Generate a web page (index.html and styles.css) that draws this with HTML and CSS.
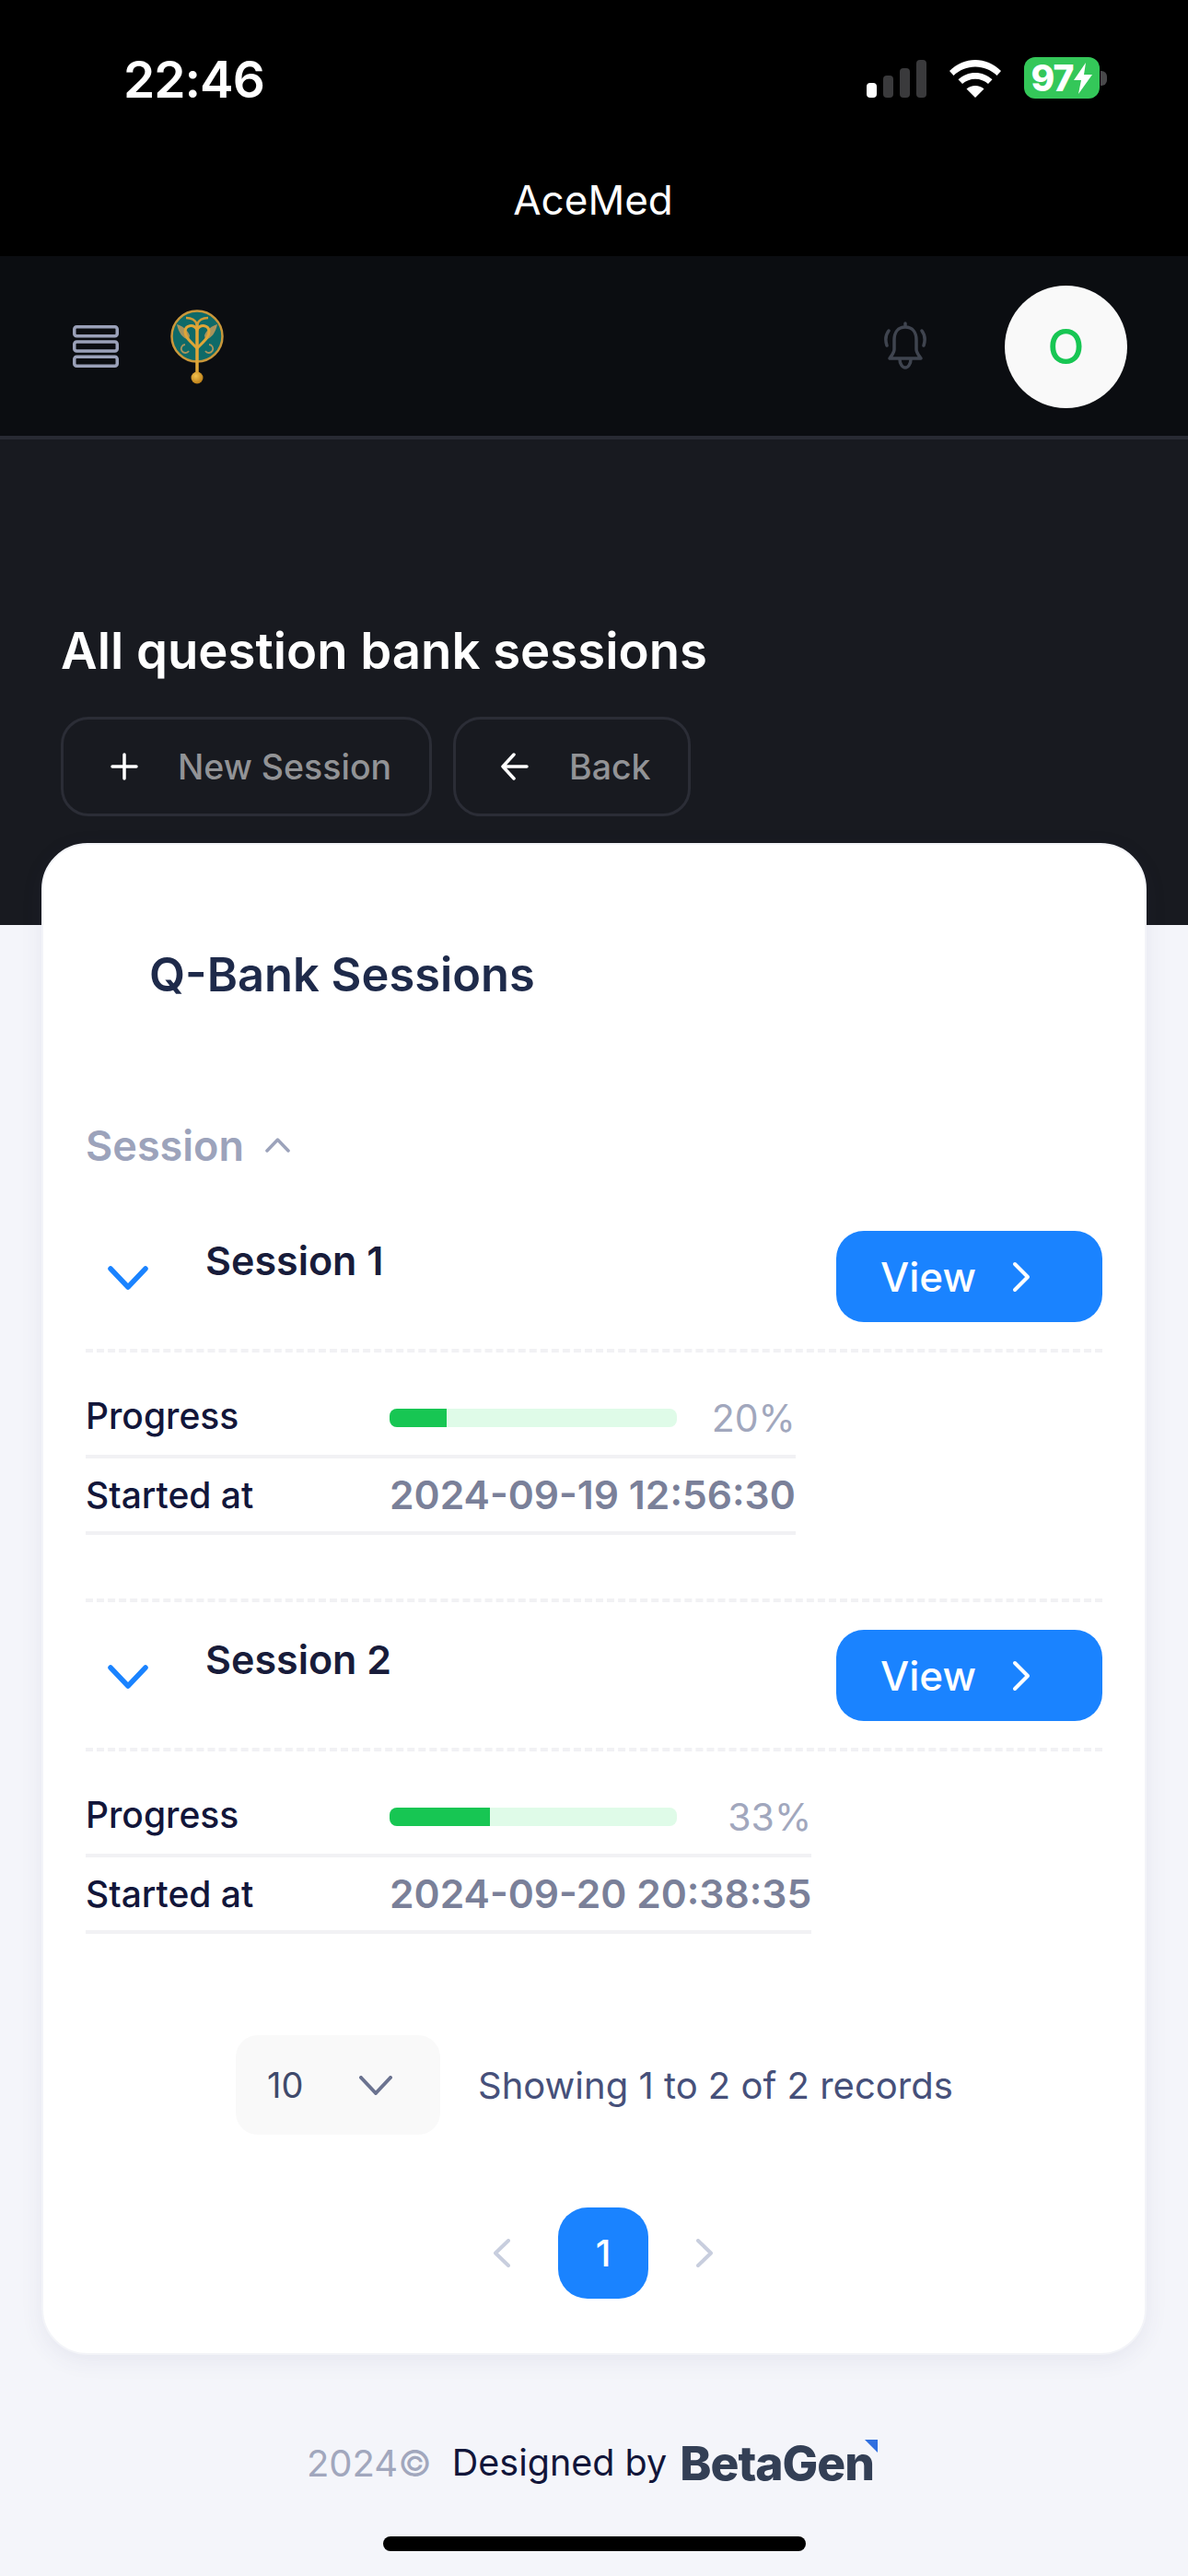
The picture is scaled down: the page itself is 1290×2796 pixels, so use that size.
FILE: index.html
```html
<!DOCTYPE html>
<html lang="en">
<head>
<meta charset="utf-8">
<title>AceMed</title>
<link rel="stylesheet" href="styles.css">
</head>
<body>
<div class="app">
  <div class="sys">
    <div class="status">
      <span class="time">22:46</span>
      <div class="status-icons">
        <svg class="signal" width="65" height="41" viewBox="0 0 65 41"><rect x="0" y="25" width="11" height="16" rx="4" fill="#fff"/><rect x="18" y="17" width="11" height="24" rx="4" fill="#3a3a3c"/><rect x="36" y="9" width="11" height="32" rx="4" fill="#3a3a3c"/><rect x="54" y="0" width="11" height="41" rx="4" fill="#3a3a3c"/></svg>
        <svg class="wifi" width="56" height="41" viewBox="0 0 56 41" fill="#fff"><path d="M28 0C38 0 48 4 56 12l-4.500 5C45 11 37 7.500 28 7.500S11 11 4.500 17L0 12C8 4 18 0 28 0z"/><path d="M28 14c7 0 13.500 2.700 18.500 7.300L42 26c-3.700-3.300-8.700-5.300-14-5.300s-10.300 2-14 5.300l-4.500-4.700C14.500 16.700 21 14 28 14z"/><path d="M28 28c3.700 0 7 1.300 9.500 3.600L28 41l-9.500-9.400C21 29.300 24.300 28 28 28z"/></svg>
        <div class="battery">
          <div class="battery-body"><span class="battery-num">97</span><svg width="20" height="34" viewBox="0 0 20 34" fill="#fff"><path d="M13 0 0 19h8l-3 15L20 13h-9z"/></svg></div>
          <span class="battery-tip"></span>
        </div>
      </div>
    </div>
    <div class="app-name">AceMed</div>
  </div>

  <header class="nav">
    <svg class="menu" width="50" height="46" viewBox="0 0 50 46" fill="none" stroke="#9aa0b8" stroke-width="3.500"><rect x="1.750" y="1.750" width="46.500" height="10" rx="2.500"/><rect x="1.750" y="18" width="46.500" height="10" rx="2.500"/><rect x="1.750" y="34.250" width="46.500" height="10" rx="2.500"/></svg>
    <svg class="logo" width="58" height="82" viewBox="0 0 58 82" fill="none">
      <defs>
        <radialGradient id="ball" cx="40%" cy="35%" r="70%"><stop offset="0" stop-color="#f2c14e"/><stop offset="1" stop-color="#b87a14"/></radialGradient>
      </defs>
      <circle cx="29" cy="29" r="27.500" fill="#0e6a68" stroke="#c9973a" stroke-width="2.500"/>
      <path d="M7 16c2 9 6 15 13 17l1-5c-3-7-8-10-14-12zM51 16c-2 9-6 15-13 17l-1-5c3-7 8-10 14-12z" fill="#a8935c"/>
      <path d="M29 42C21 34 16 30 16 24c0-7 9-9 13-2 4-7 13-5 13 2 0 6-5 10-13 18z" stroke="#dfa637" stroke-width="3"/>
      <path d="M29 68V14" stroke="#dfa637" stroke-width="3.500"/>
      <path d="M29 16c-2-5-6-7-12-7M29 16c2-5 6-7 12-7" stroke="#cf9a35" stroke-width="2.500"/>
      <path d="M16 38a4.500 4.500 0 1 0 4 7M42 38a4.500 4.500 0 1 1-4 7" stroke="#a8935c" stroke-width="1.800"/>
      <circle cx="29" cy="74" r="6.500" fill="url(#ball)"/>
    </svg>
    <div class="nav-spacer"></div>
    <svg class="bell" width="46" height="52" viewBox="0 0 46 52" fill="none" stroke="#3f444f" stroke-width="3.500" stroke-linecap="round" stroke-linejoin="round"><path d="M23 2v4M23 6c-8 0-12 6-12 14v10c0 4-3 7-5 10h34c-2-3-5-6-5-10V20c0-8-4-14-12-14z"/><path d="M17 41c0 5 3 9 6 9s6-4 6-9"/><path d="M3 26c-2-6-1-12 2-16M43 26c2-6 1-12-2-16"/></svg>
    <div class="avatar">O</div>
  </header>

  <section class="hero">
    <h1 class="hero-title">All question bank sessions</h1>
    <div class="hero-actions">
      <a class="ghost-btn ghost-new">
        <svg width="30" height="30" viewBox="0 0 30 30" stroke="#fff" stroke-width="3.500" stroke-linecap="round"><path d="M15 2v26M2 15h26"/></svg>
        <span>New Session</span>
      </a>
      <a class="ghost-btn ghost-back">
        <svg width="30" height="30" viewBox="0 0 30 30" fill="none" stroke="#fff" stroke-width="3.500" stroke-linecap="round" stroke-linejoin="round"><path d="M14 2 2 15l12 13M2 15h26"/></svg>
        <span>Back</span>
      </a>
    </div>
  </section>

  <main class="card">
    <h2 class="card-title">Q-Bank Sessions</h2>
    <div class="col-head">
      <span>Session</span>
      <svg width="27" height="16" viewBox="0 0 27 16" fill="none" stroke="#9ca3bb" stroke-width="3.500" stroke-linecap="round" stroke-linejoin="round"><path d="M2 14 13.500 2 25 14"/></svg>
    </div>

    <article class="item">
      <div class="item-head">
        <svg class="item-chev" width="44" height="26" viewBox="0 0 44 26" fill="none" stroke="#1a83ff" stroke-width="5.500" stroke-linecap="round" stroke-linejoin="round"><path d="M3 3l19 20L41 3"/></svg>
        <span class="item-name">Session 1</span>
        <a class="view-btn"><span>View</span><svg width="20" height="34" viewBox="0 0 20 34" fill="none" stroke="#fff" stroke-width="4" stroke-linecap="round" stroke-linejoin="round"><path d="M3 3l14 14L3 31"/></svg></a>
      </div>
      <table class="details">
        <tr><td class="label label-top">Progress</td><td><div class="progress"><div class="bar"><div class="bar-fill" style="width:20%"></div></div><span class="pct">20%</span></div></td></tr>
        <tr><td class="label">Started at</td><td class="date">2024-09-19 12:56:30</td></tr>
      </table>
    </article>

    <article class="item item-next">
      <div class="item-head">
        <svg class="item-chev" width="44" height="26" viewBox="0 0 44 26" fill="none" stroke="#1a83ff" stroke-width="5.500" stroke-linecap="round" stroke-linejoin="round"><path d="M3 3l19 20L41 3"/></svg>
        <span class="item-name">Session 2</span>
        <a class="view-btn"><span>View</span><svg width="20" height="34" viewBox="0 0 20 34" fill="none" stroke="#fff" stroke-width="4" stroke-linecap="round" stroke-linejoin="round"><path d="M3 3l14 14L3 31"/></svg></a>
      </div>
      <table class="details">
        <tr><td class="label label-top">Progress</td><td><div class="progress"><div class="bar"><div class="bar-fill" style="width:35%"></div></div><span class="pct">33%</span></div></td></tr>
        <tr><td class="label">Started at</td><td class="date">2024-09-20 20:38:35</td></tr>
      </table>
    </article>

    <div class="records">
      <div class="select"><span>10</span><svg width="36" height="21" viewBox="0 0 36 21" fill="none" stroke="#6b7390" stroke-width="4" stroke-linecap="round" stroke-linejoin="round"><path d="M2 2l16 17L34 2"/></svg></div>
      <span class="records-text">Showing 1 to 2 of 2 records</span>
    </div>

    <nav class="pager">
      <svg width="18" height="31" viewBox="0 0 18 31" fill="none" stroke="#c8cede" stroke-width="4" stroke-linecap="round" stroke-linejoin="round"><path d="M16 2 2 15.500 16 29"/></svg>
      <span class="page-num">1</span>
      <svg width="18" height="31" viewBox="0 0 18 31" fill="none" stroke="#c8cede" stroke-width="4" stroke-linecap="round" stroke-linejoin="round"><path d="M2 2l14 13.500L2 29"/></svg>
    </nav>
  </main>

  <footer class="footer">
    <span class="year">2024©</span>
    <span class="designed">Designed by</span>
    <span class="brand">BetaGen<svg class="brand-mark" width="14" height="14" viewBox="0 0 14 14"><path d="M0 0h14v14z" fill="#2f6fe0"/></svg></span>
  </footer>
  <div class="home-wrap"><div class="home-bar"></div></div>
</div>
</body>
</html>
```
FILE: styles.css
```css
* { box-sizing: border-box; }
html, body { margin: 0; padding: 0; }
body { background: #f4f5fa; font-family: Inter, "Noto Sans", sans-serif; }
.app { width: 1290px; height: 2796px; overflow: hidden; display: flex; flex-direction: column; }
a { display: flex; }

/* system chrome */
.sys { background: #000; height: 278px; color: #fff; flex: none; }
.status { display: flex; justify-content: space-between; align-items: flex-start; padding: 62px 88px 0 134px; height: 175px; }
.time { font-size: 55px; font-weight: 600; line-height: 48px; font-family: Inter, sans-serif; letter-spacing: -1px; }
.status-icons { display: flex; gap: 25px; align-items: flex-start; }
.signal, .wifi { margin-top: 3px; }
.battery { display: flex; align-items: center; }
.battery-body { width: 82px; height: 45px; background: #34c759; border-radius: 12px; display: flex; align-items: center; justify-content: center; gap: 1px; }
.battery-num { font-size: 39px; font-weight: 800; line-height: 45px; letter-spacing: -1px; }
.battery-tip { width: 7px; height: 16px; background: #48484a; border-radius: 0 6px 6px 0; margin-left: 1px; }
.app-name { text-align: center; font-size: 44px; line-height: 60px; margin-top: 12px; margin-left: -2px; }

/* nav */
.nav { flex: none; height: 199px; background: #0b0d11; border-bottom: 4px solid #282a33; display: flex; align-items: flex-start; padding: 32px 66px 0 79px; }
.menu { margin-top: 43px; }
.logo { margin: 26px 0 0 56px; }
.nav-spacer { flex: 1; }
.bell { margin-top: 39px; }
.avatar { width: 133px; height: 133px; border-radius: 50%; background: #f9f9f9; color: #17c653; font-size: 52px; font-weight: 500; display: flex; align-items: center; justify-content: center; margin-left: 85px; }

/* hero */
.hero { flex: none; height: 527px; background: #181a20; padding: 198px 0 0 66px; }
.hero-title { margin: 0; color: #fff; font-size: 54.500px; line-height: 62px; font-weight: 600; }
.hero-actions { display: flex; gap: 23px; margin-top: 41px; }
.ghost-btn { height: 108px; border: 3px solid #2b2d36; border-radius: 30px; align-items: center; color: #929396; font-size: 37.500px; font-weight: 500; }
.ghost-new { width: 403px; padding-left: 51px; gap: 43px; }
.ghost-back { width: 258px; padding-left: 49px; gap: 44px; }

/* card */
.card { flex: none; width: 1200px; margin: -89px 0 0 45px; background: #fff; border: 2px solid #f3f4f8; border-radius: 50px; box-shadow: 0 6px 24px rgba(60, 70, 110, 0.08); padding: 110px 46px 59px; }
.card-title { margin: 0 0 0 69px; font-size: 50.600px; line-height: 62px; font-weight: 600; color: #1e2a4a; }
.col-head { display: flex; align-items: center; gap: 23px; margin-top: 129px; height: 50px; font-size: 45px; font-weight: 600; color: #9ca3bb; }
.item { margin-top: 68px; }
.item-next { margin-top: 69px; border-top: 4px dashed #f1f1f4; padding-top: 30px; }
.item-head { display: flex; align-items: flex-start; padding-bottom: 28px; border-bottom: 4px dashed #f1f1f4; height: 132px; }
.item-chev { margin: 38px 0 0 24px; }
.item-name { margin-left: 62px; flex: 1; font-size: 43px; line-height: 52px; font-weight: 600; color: #181c3a; margin-top: 6px; }
.view-btn { width: 289px; height: 99px; background: #1a83ff; border-radius: 30px; color: #fff; font-size: 44px; font-weight: 500; align-items: center; padding-left: 48px; gap: 39px; }

.details { border-collapse: collapse; margin-top: 30px; }
.details td { height: 83px; padding: 0; border-bottom: 4px solid #f1f1f4; }
.label { width: 330px; font-size: 39px; font-weight: 500; color: #12163a; }
.details .label-top { padding-bottom: 4px; }
.date { font-size: 42.600px; font-weight: 600; color: #7a8099; white-space: nowrap; }
.progress { display: flex; justify-content: space-between; align-items: center; }
.bar { width: 312px; height: 20px; background: #dffbe8; border-radius: 8px; overflow: hidden; }
.bar-fill { height: 100%; background: #17c653; }
.pct { font-size: 41px; color: #a1a7bd; }

.records { display: flex; align-items: center; margin: 110px 0 0 163px; gap: 41px; }
.select { width: 222px; height: 108px; background: #f9f9f9; border-radius: 24px; display: flex; align-items: center; justify-content: space-between; padding: 0 52px 0 34px; font-size: 38px; color: #3f4a6b; }
.records-text { font-size: 40px; color: #46507a; }
.pager { display: flex; align-items: center; justify-content: center; gap: 52px; margin-top: 79px; padding-left: 20px; }
.page-num { width: 98px; height: 99px; background: #1a83ff; border-radius: 32px; color: #fff; font-size: 40px; font-weight: 500; display: flex; align-items: center; justify-content: center; }

/* footer */
.footer { flex: none; height: 179px; padding: 55px 8px 0 0; display: flex; align-items: center; justify-content: center; }
.year { font-size: 40px; color: #a1a7bd; }
.designed { font-size: 39.500px; color: #12163a; margin-left: 22px; }
.brand { position: relative; font-size: 51.500px; font-weight: 800; color: #333f55; margin-left: 14px; letter-spacing: -1px; }
.brand-mark { position: absolute; top: 6px; right: -4px; }
.home-wrap { flex: none; display: flex; justify-content: center; padding-top: 18px; }
.home-bar { width: 459px; height: 16px; background: #000; border-radius: 8px; }
```
